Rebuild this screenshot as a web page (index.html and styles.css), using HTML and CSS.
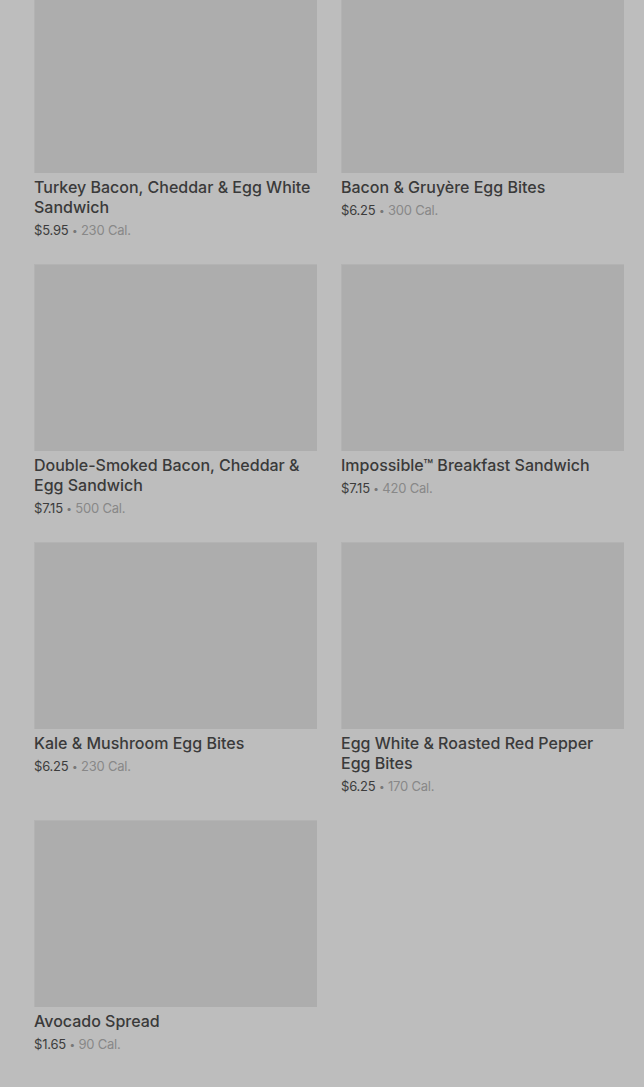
FILE: index.html
```html
<!DOCTYPE html>
<html lang="en">
<head>
    <meta charset="UTF-8">
    <meta name="viewport" content="width=device-width, initial-scale=1.0">
    <title>Breakfast</title>
    <link rel="stylesheet" href="styles.css">
</head>
<body>
    <div class="menu-grid">
        <div class="card">
            <div class="thumb"></div>
            <h3>Turkey Bacon, Cheddar &amp; Egg White Sandwich</h3>
            <p class="meta"><span class="price">$5.95</span> <span class="dot">•</span> <span class="cal">230 Cal.</span></p>
        </div>
        <div class="card">
            <div class="thumb"></div>
            <h3>Bacon &amp; Gruyère Egg Bites</h3>
            <p class="meta"><span class="price">$6.25</span> <span class="dot">•</span> <span class="cal">300 Cal.</span></p>
        </div>
        <div class="card">
            <div class="thumb"></div>
            <h3>Double-Smoked Bacon, Cheddar &amp; Egg Sandwich</h3>
            <p class="meta"><span class="price">$7.15</span> <span class="dot">•</span> <span class="cal">500 Cal.</span></p>
        </div>
        <div class="card">
            <div class="thumb"></div>
            <h3>Impossible™ Breakfast Sandwich</h3>
            <p class="meta"><span class="price">$7.15</span> <span class="dot">•</span> <span class="cal">420 Cal.</span></p>
        </div>
        <div class="card">
            <div class="thumb"></div>
            <h3>Kale &amp; Mushroom Egg Bites</h3>
            <p class="meta"><span class="price">$6.25</span> <span class="dot">•</span> <span class="cal">230 Cal.</span></p>
        </div>
        <div class="card">
            <div class="thumb"></div>
            <h3>Egg White &amp; Roasted Red Pepper Egg Bites</h3>
            <p class="meta"><span class="price">$6.25</span> <span class="dot">•</span> <span class="cal">170 Cal.</span></p>
        </div>
        <div class="card">
            <div class="thumb"></div>
            <h3>Avocado Spread</h3>
            <p class="meta"><span class="price">$1.65</span> <span class="dot">•</span> <span class="cal">90 Cal.</span></p>
        </div>
    </div>
</body>
</html>
```
FILE: styles.css
```css
html, body {
    margin: 0;
    background-color: #bdbdbd;
    font-family: 'Inter', 'Roboto', sans-serif;
    overflow: hidden;
}

.menu-grid {
    display: grid;
    grid-template-columns: 283px 283px;
    column-gap: 24px;
    row-gap: 24px;
    padding: 0 20px 40px 34px;
    margin-top: -14px;
    align-items: start;
}

.thumb {
    height: 187px;
    background-color: #adadad;
    box-shadow: inset 1px 1px 0 #b3b3b3;
}

.card h3 {
    margin: 4px 0 0 0;
    font-size: 16px;
    line-height: 20px;
    font-weight: 500;
    color: #3a3a3a;
}

.meta {
    margin: 3px 0 0 0;
    font-size: 13px;
    line-height: 20px;
    letter-spacing: -0.2px;
}

.price {
    color: #3c3c3c;
}

.dot {
    font-size: 10px;
    line-height: 0;
    vertical-align: 1px;
    color: #777;
}

.cal {
    color: #888;
}
```
